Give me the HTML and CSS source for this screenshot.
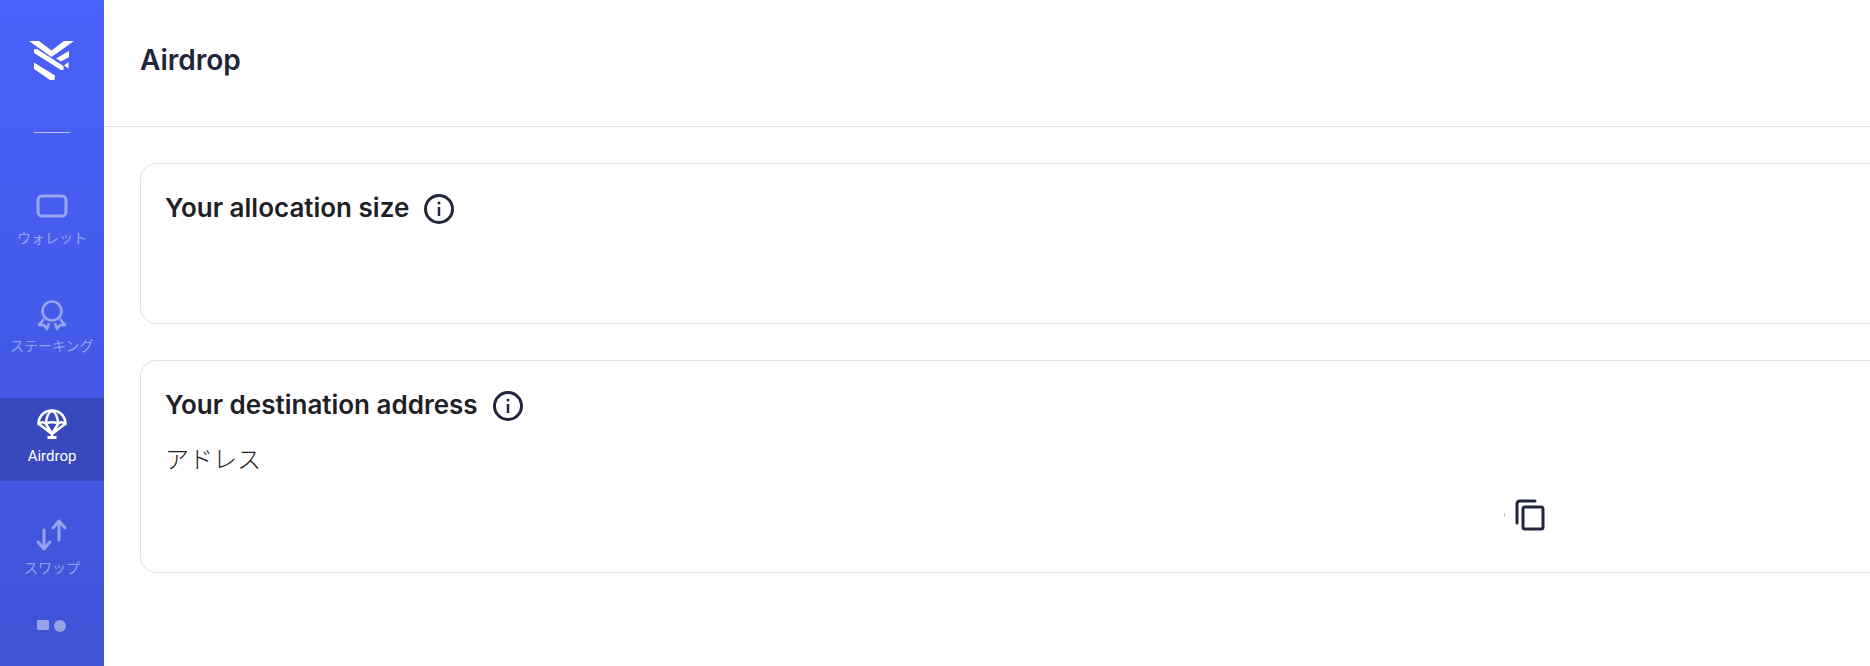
FILE: index.html
```html
<!DOCTYPE html>
<html lang="ja">
<head>
    <meta charset="UTF-8">
    <meta name="viewport" content="width=device-width, initial-scale=1.0">
    <title>Airdrop</title>
    <link rel="stylesheet" href="styles.css">
</head>
<body>
    <div class="sidebar">
        <div class="logo">
            <svg width="46" height="40" viewBox="0 0 46 40" fill="#fff">
                <path d="M0 0H10L22.500 9.500L35 0H45L22.500 16Z"/>
                <path d="M5 8L8 8L34.500 25V29H32L5 12Z"/>
                <path d="M5 13L30 29V33H26L5 19Z" fill="none"/>
                <path d="M5 21.500L26 34.500L25.500 39L21 39L5 28Z"/>
                <path d="M40 10V16L32 20.500L27 17.500Z"/>
                <path d="M39.500 21V27.500L35 24.500Z"/>
            </svg>
        </div>
        <div class="divider"></div>
        <a class="nav-item nav-wallet" href="#">
            <svg width="32" height="24" viewBox="0 0 32 24" fill="none" stroke="currentColor" stroke-width="3">
                <rect x="2" y="2" width="28" height="20" rx="4"/>
            </svg>
            <span>ウォレット</span>
        </a>
        <a class="nav-item nav-staking" href="#">
            <svg width="30" height="32" viewBox="0 0 30 32" fill="none" stroke="currentColor" stroke-width="2.500" stroke-linejoin="round">
                <circle cx="15" cy="12" r="9.500"/>
                <path d="M7 20L2 26L7 26L10 30L12 24"/>
                <path d="M23 20L28 26L23 26L20 30L18 24"/>
            </svg>
            <span>ステーキング</span>
        </a>
        <a class="nav-item nav-active" href="#">
            <svg width="30" height="30" viewBox="0 0 30 30" fill="none" stroke="currentColor" stroke-width="2.500" stroke-linejoin="round">
                <path d="M1.500 15C1.500 7 7.500 1.500 15 1.500S28.500 7 28.500 15C26 12.500 23 12.500 21 15C19 12.500 11 12.500 9 15C7 12.500 4 12.500 1.500 15Z"/>
                <path d="M9 15C9 9 11 4 15 1.500C19 4 21 9 21 15"/>
                <path d="M2 15L15 25L28 15M9 15L15 25L21 15"/>
                <path d="M15 25V28"/>
                <path d="M10.500 28.500H19.500" stroke-width="3"/>
            </svg>
            <span>Airdrop</span>
        </a>
        <a class="nav-item nav-swap" href="#">
            <svg width="32" height="32" viewBox="0 0 32 32" fill="none" stroke="currentColor" stroke-width="3" stroke-linecap="round" stroke-linejoin="round">
                <path d="M8 11V30M2 23L8 30L14 23"/>
                <path d="M23 21V2M17 9L23 2L29 9"/>
            </svg>
            <span>スワップ</span>
        </a>
        <a class="nav-item nav-more" href="#">
            <svg width="32" height="24" viewBox="0 0 32 24" fill="currentColor">
                <rect x="1" y="1" width="12" height="10" rx="1"/>
                <circle cx="24" cy="7" r="6"/>
            </svg>
        </a>
    </div>
    <div class="main">
        <div class="header">
            <h1>Airdrop</h1>
        </div>
        <div class="content">
            <div class="card card-allocation">
                <div class="card-title">
                    <h2>Your allocation size</h2>
                    <svg class="info" width="32" height="32" viewBox="0 0 32 32" fill="none" stroke="#22263a" stroke-width="3">
                        <circle cx="16" cy="16" r="13.500"/>
                        <path d="M16 14V23" stroke-width="2.500"/>
                        <circle cx="16" cy="10" r="1.500" fill="#22263a" stroke="none"/>
                    </svg>
                </div>
            </div>
            <div class="card card-address">
                <div class="card-title">
                    <h2>Your destination address</h2>
                    <svg class="info" width="32" height="32" viewBox="0 0 32 32" fill="none" stroke="#22263a" stroke-width="3">
                        <circle cx="16" cy="16" r="13.500"/>
                        <path d="M16 14V23" stroke-width="2.500"/>
                        <circle cx="16" cy="10" r="1.500" fill="#22263a" stroke="none"/>
                    </svg>
                </div>
                <div class="address-label">アドレス</div>
                <div class="address-row">
                    <span class="address-mark"></span>
                    <svg width="30" height="32" viewBox="0 0 30 32" fill="none" stroke="#22263a" stroke-width="3" stroke-linecap="round" stroke-linejoin="round">
                        <path d="M2 24V5Q2 2 5 2H20"/>
                        <rect x="8" y="8" width="20" height="22" rx="2"/>
                    </svg>
                </div>
            </div>
        </div>
    </div>
</body>
</html>
```

FILE: styles.css
```css
html, body {
    height: 100%;
}
body {
    margin: 0;
    display: flex;
    height: 666px;
    overflow: hidden;
    background-color: #fff;
    font-family: "Inter", "Noto Sans CJK JP", sans-serif;
    color: #1f2025;
}
.sidebar {
    width: 104px;
    flex-shrink: 0;
    height: 666px;
    overflow: hidden;
    display: flex;
    flex-direction: column;
    align-items: stretch;
    background-image: linear-gradient(to bottom, #4a60fa, #3e54d6);
}
.logo {
    display: flex;
    justify-content: center;
    padding-top: 41px;
    height: 91px;
}
.logo svg {
    display: block;
}
.divider {
    width: 36px;
    height: 1px;
    margin: 0 auto;
    background-color: rgba(255, 255, 255, 0.6);
}
.nav-item {
    display: flex;
    flex-direction: column;
    align-items: center;
    text-decoration: none;
    color: rgba(255, 255, 255, 0.45);
    font-size: 14px;
    line-height: 24px;
}
.nav-item svg {
    display: block;
}
.nav-item span {
    width: 100%;
    box-sizing: border-box;
    padding: 0 10px;
    text-align: center;
}
.nav-wallet {
    margin-top: 61px;
}
.nav-wallet span {
    margin-top: 8px;
}
.nav-staking {
    margin-top: 49px;
}
.nav-staking span {
    margin-top: 3px;
    text-align: left;
}
.nav-active {
    margin-top: 40px;
    height: 83px;
    box-sizing: border-box;
    padding-top: 11px;
    color: #fff;
    background-color: #3749bd;
}
.nav-active span {
    margin-top: 5px;
    font-family: "Roboto", sans-serif;
    font-size: 15px;
}
.nav-swap {
    margin-top: 38px;
}
.nav-swap span {
    margin-top: 5px;
}
.nav-more {
    margin-top: 39px;
}
.main {
    flex: 1;
    min-width: 0;
    overflow: hidden;
}
.header {
    height: 126px;
    box-sizing: content-box;
    display: flex;
    align-items: center;
    padding-left: 36px;
    border-bottom: 1px solid #e2e1ec;
}
.header h1 {
    margin: 0 0 7px;
    font-size: 28px;
    font-weight: 600;
    color: #22263a;
}
.content {
    width: 1800px;
    padding: 36px;
    display: flex;
    flex-direction: column;
    gap: 36px;
}
.card {
    box-sizing: border-box;
    border: 1px solid #e2e1ec;
    border-radius: 16px;
    padding: 24px;
}
.card-allocation {
    height: 161px;
}
.card-address {
    height: 213px;
}
.card-title {
    display: flex;
    align-items: center;
    gap: 14px;
    height: 38px;
}
.card-title h2 {
    margin: 0;
    font-size: 26px;
    font-weight: 600;
    color: #1f2025;
}
.info {
    display: block;
    margin-top: 3px;
}
.address-label {
    margin-top: 19px;
    font-size: 24px;
    line-height: 36px;
    font-weight: 300;
}
.address-row {
    display: flex;
    align-items: center;
    justify-content: flex-end;
    gap: 10px;
    width: 1380px;
    margin-top: 21px;
}
.address-mark {
    width: 1px;
    height: 4px;
    background-color: #c9cad0;
}
```
